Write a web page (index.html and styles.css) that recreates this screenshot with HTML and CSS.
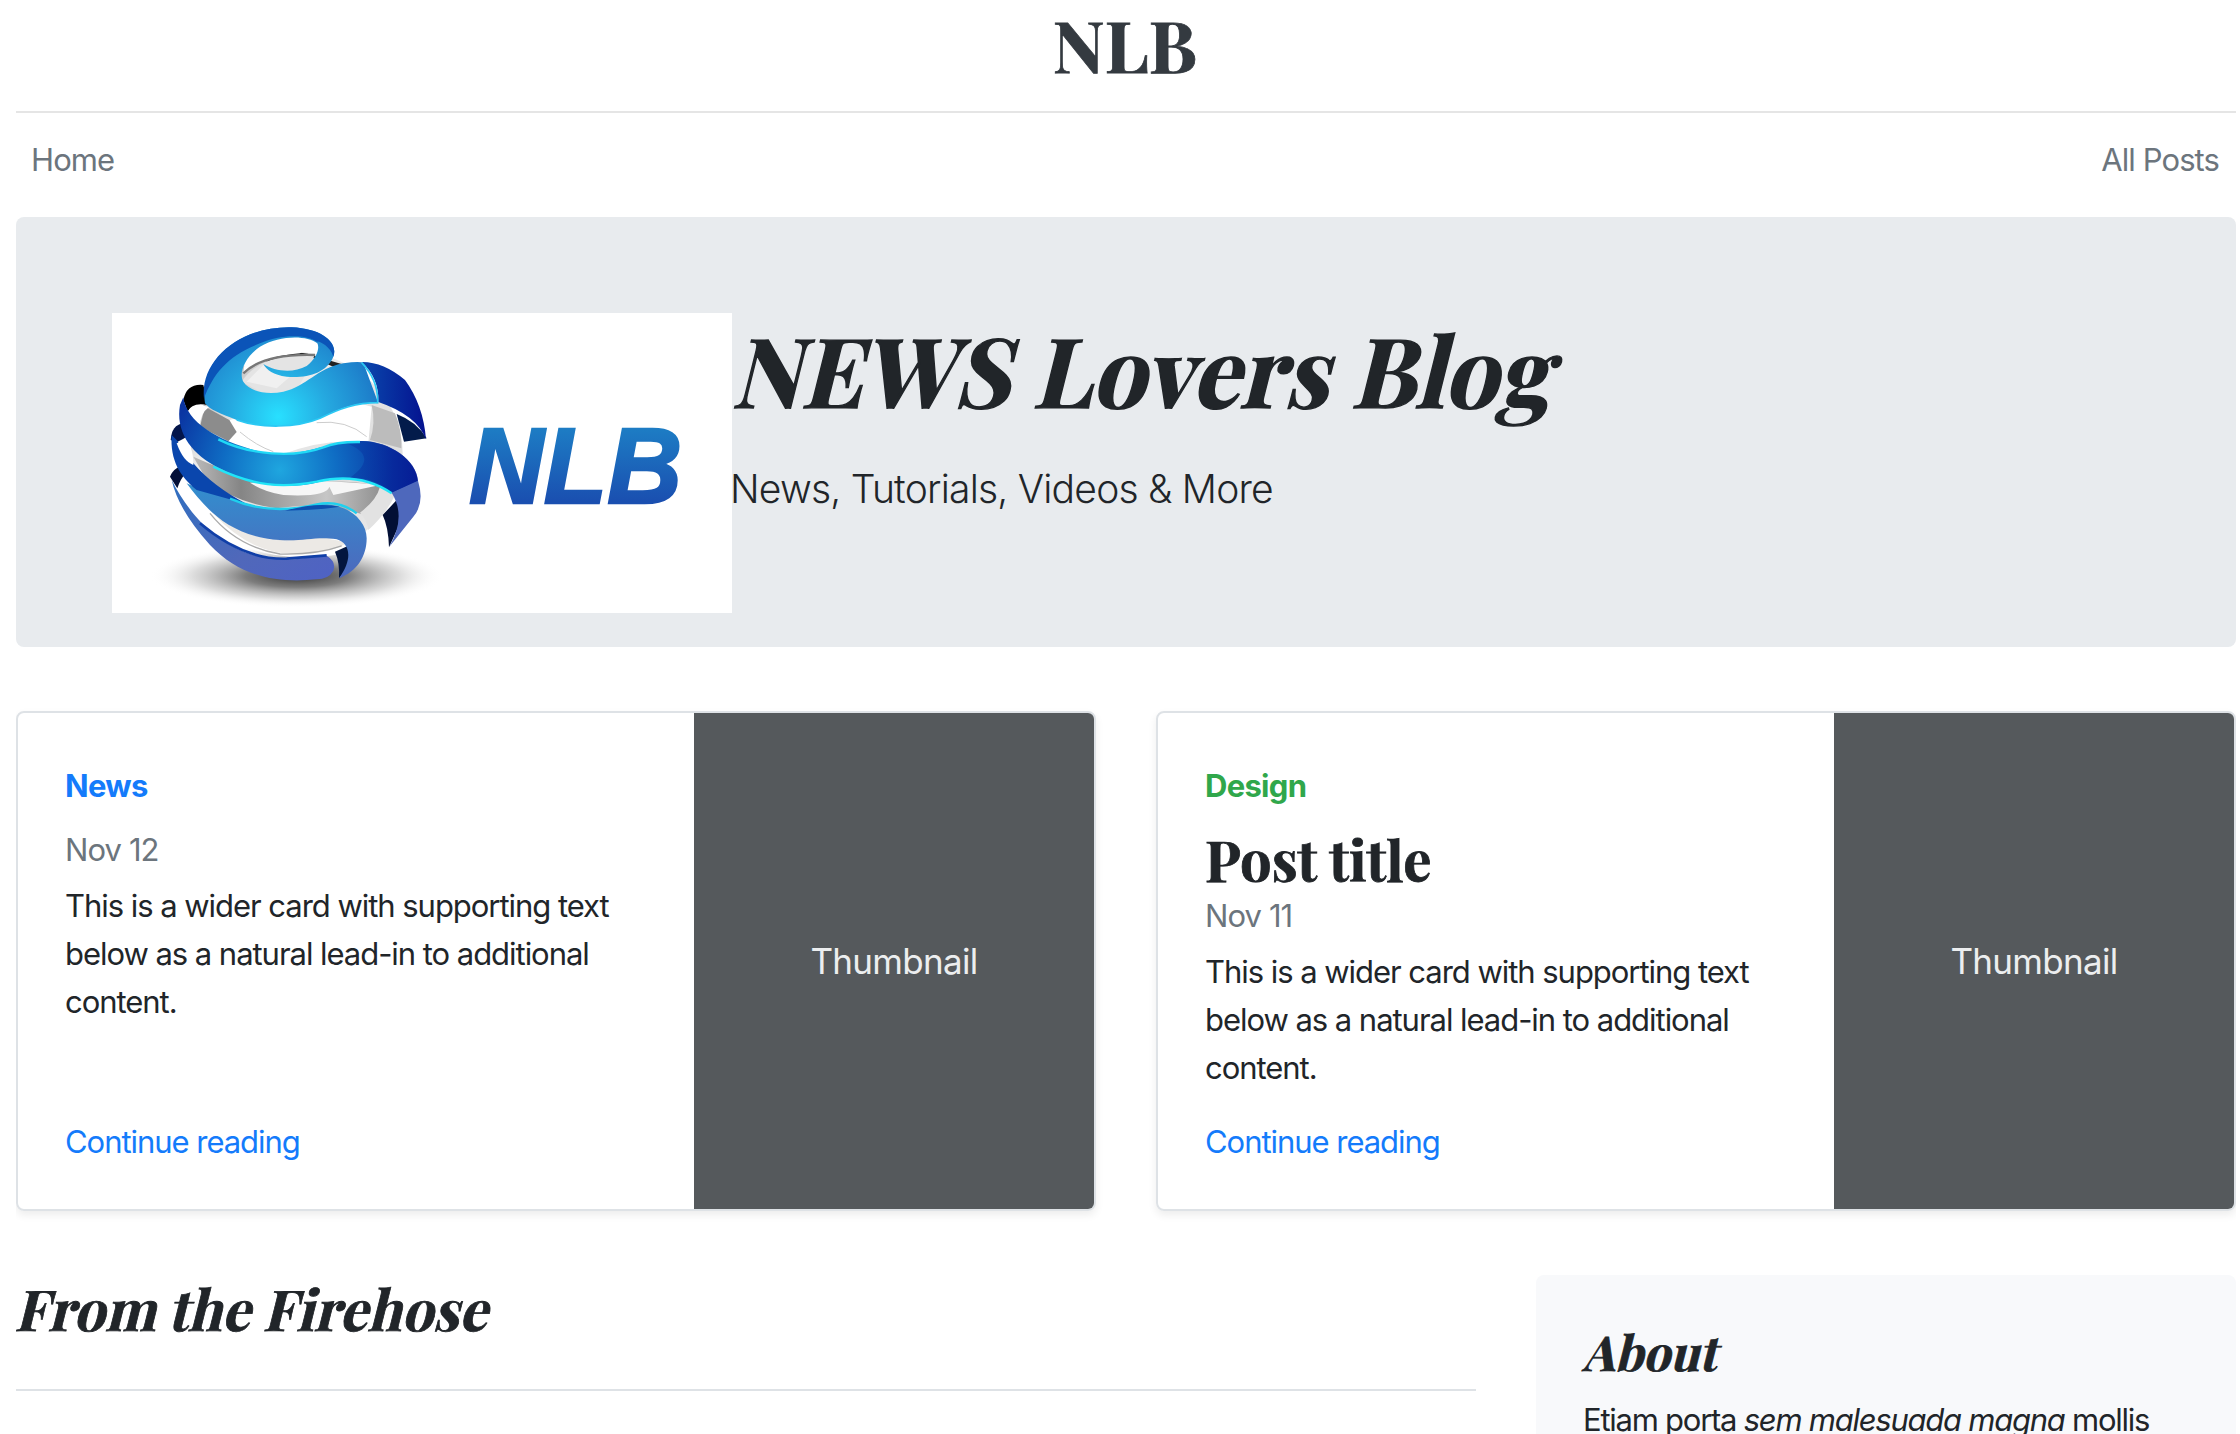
FILE: index.html
```html
<!DOCTYPE html>
<html lang="en">
<head>
<meta charset="utf-8">
<title>NLB</title>
<link rel="stylesheet" href="styles.css">
</head>
<body>
<div class="container">
  <header class="blog-header"><a class="blog-logo">NLB</a></header>
  <nav class="nav"><a>Home</a><a class="nav-all">All Posts</a></nav>

  <section class="jumbotron">
    <svg class="logo" viewBox="0 0 620 300" role="img" aria-label="NLB">
      <defs>
        <radialGradient id="shadow"><stop offset="0" stop-color="#333"/><stop offset=".35" stop-color="#666" stop-opacity=".85"/><stop offset=".7" stop-color="#999" stop-opacity=".35"/><stop offset="1" stop-color="#fff" stop-opacity="0"/></radialGradient>
        <radialGradient id="top" gradientUnits="userSpaceOnUse" cx="385" cy="320" r="330"><stop offset="0" stop-color="#28e0ff"/><stop offset=".45" stop-color="#25a9e0"/><stop offset="1" stop-color="#1b72c4"/></radialGradient>
        <radialGradient id="mid" gradientUnits="userSpaceOnUse" cx="390" cy="480" r="340"><stop offset="0" stop-color="#1fa6df"/><stop offset=".5" stop-color="#0f6dc4"/><stop offset="1" stop-color="#0a35a2"/></radialGradient>
        <linearGradient id="low" x1="0" y1="0" x2="0" y2="1"><stop offset="0" stop-color="#328fce"/><stop offset="1" stop-color="#4d68bd"/></linearGradient>
        <linearGradient id="base" x1="0" y1="0" x2="1" y2="1"><stop offset="0" stop-color="#2e6fc0"/><stop offset=".6" stop-color="#5068ba"/><stop offset="1" stop-color="#4f62c4"/></linearGradient>
        <linearGradient id="dark" x1="0" y1="0" x2="1" y2="0"><stop offset="0" stop-color="#0a48ad"/><stop offset="1" stop-color="#04118f"/></linearGradient>
        <linearGradient id="ball" x1="0" y1="0" x2="1" y2="1"><stop offset="0" stop-color="#999"/><stop offset=".3" stop-color="#eee"/><stop offset=".7" stop-color="#ddd"/><stop offset="1" stop-color="#f3f3f3"/></linearGradient>
        <linearGradient id="grey" x1="0" y1="0" x2="1" y2="0"><stop offset="0" stop-color="#bbb"/><stop offset=".25" stop-color="#858585"/><stop offset=".7" stop-color="#c6c6c6"/><stop offset="1" stop-color="#8e8e8e"/></linearGradient>
        <linearGradient id="word" x1="0" y1="0" x2="0" y2="1"><stop offset=".2" stop-color="#1d7cc4"/><stop offset=".8" stop-color="#1a4fb0"/></linearGradient>
      </defs>
      <g transform="translate(38 -3) scale(.33333)">
        <ellipse cx="440" cy="798" rx="440" ry="96" fill="url(#shadow)"/>
        <ellipse cx="440" cy="432" rx="318" ry="305" fill="url(#ball)"/>
        <path d="M350 150Q440 112 500 140L585 165L560 175L485 142Q420 130 350 155Z" fill="#222"/>
        <path d="M240 330Q500 240 665 290L655 400Q540 380 400 432Q310 430 230 392Z" fill="#fff"/>
        <path d="M165 290L238 330L260 366L235 394L150 350Z" fill="#8c8c8c"/>
        <path d="M665 285L735 310Q756 360 754 415L660 390Q678 340 665 285Z" fill="#bcbcbc"/>
        <path d="M270 366Q320 408 370 425M500 338Q590 328 650 380" fill="none" stroke="#ccc" stroke-width="3"/>
        <path d="M130 440Q240 490 370 525Q560 500 700 530Q680 570 635 612Q520 575 380 595Q260 580 170 510Z" fill="url(#grey)"/>
        <path d="M300 518Q500 505 690 525L550 555L538 530Q530 562 400 555Q340 545 300 518Z" fill="#f6f6f6"/>
        <path d="M690 530L735 555Q710 610 655 660Q650 625 630 608Q680 570 690 530Z" fill="#e2e2e2"/>
        <path d="M90 500Q95 480 150 540Q230 680 410 695L585 685Q620 730 530 738Q380 755 260 700Q150 640 90 530Z" fill="#fff"/>
        <path d="M190 610Q300 735 450 733Q540 730 590 700Q540 675 410 695Q270 680 190 610Z" fill="#ece9e5"/>
        <path d="M180 610Q260 710 390 732Q500 735 575 708" fill="none" stroke="#aaa" stroke-width="4"/>
        <path d="M740 312Q800 335 830 385L762 395Z" fill="#031b4b"/>
        <path d="M100 270Q110 220 160 225L175 285Q125 275 113 305Z" fill="#000"/>
        <path d="M113 305Q125 280 178 290Q150 310 150 350Q120 335 113 305Z" fill="#fff"/>
        <path d="M62 390Q65 345 100 340L150 350Q115 380 80 397Z" fill="#03154a"/>
        <path d="M60 500Q70 470 120 458L135 480Q100 480 82 535Z" fill="#031038"/>
        <path d="M698 615L745 565L750 640L717 712Q715 650 698 615Z" fill="#020f35"/>
        <path d="M555 725L600 705L605 760L567 805Q570 760 555 725Z" fill="#03163f"/>
        <path d="M280 190Q330 140 450 130Q505 100 500 100Q470 75 350 95Q280 130 280 190Z" fill="#fff"/>
        <path d="M275 215Q330 130 495 132L480 170L440 240L350 255Z" fill="#e4e4e4"/>
        <path d="M280 190Q340 130 495 135" fill="none" stroke="#777" stroke-width="7"/>
        <path d="M340 165L420 200L380 235L290 215Z" fill="#f0f0f0"/>
        <path fill-rule="evenodd" d="M165 280C145 150 270 48 425 52C520 56 565 100 550 140C530 190 470 205 410 200C370 195 350 180 340 162C375 185 430 190 470 168C500 145 510 115 502 100C470 75 390 75 330 110C285 140 265 190 280 215C300 245 350 255 400 245C470 230 500 175 580 160Q625 153 640 158L685 280C620 275 570 295 510 325C440 355 330 355 260 330C210 310 180 300 165 280Z" fill="url(#top)"/>
        <path d="M162 265C150 150 270 48 425 52C520 56 565 100 550 140C540 105 500 90 502 96C470 72 390 72 330 100C235 135 190 190 162 265Z" fill="#0b54b8"/>
        <path d="M635 156Q700 155 765 210Q820 285 828 388Q800 315 685 276Q688 205 635 156Z" fill="url(#dark)"/>
        <path d="M635 158Q685 210 683 278C620 278 570 295 510 325C440 355 330 355 260 330" fill="none" stroke="#2bc9f4" stroke-width="5"/>
        <path d="M100 262C110 340 210 395 330 425C460 450 530 390 635 393C720 395 800 450 804 515L725 550C660 500 580 500 510 515C420 540 310 530 220 480C130 440 75 370 90 285Z" fill="url(#mid)"/>
        <path d="M590 400Q610 392 640 393C720 395 800 450 804 512L727 548C690 515 650 503 600 503Q690 440 590 400Z" fill="url(#dark)" opacity=".7"/>
        <path d="M205 388C300 435 430 445 520 412Q560 395 630 396" fill="none" stroke="#20d9f6" stroke-width="7"/>
        <path d="M190 470C310 530 400 535 500 515Q630 485 725 550" fill="none" stroke="#20e5f8" stroke-width="7"/>
        <path d="M725 548L804 512Q825 580 790 620L718 710Q770 620 725 548Z" fill="#4e68bc"/>
        <path d="M110 520Q160 545 240 565C340 605 430 600 490 585C580 570 650 625 650 685C650 740 620 785 567 805C610 745 600 700 560 688C500 678 460 695 390 690C240 680 170 600 110 520Z" fill="url(#low)"/>
        <path d="M65 375C60 450 90 500 140 540L290 582Q190 530 130 460Q95 420 82 392Z" fill="#0a46ad"/>
        <path d="M80 400Q130 380 130 465Q100 455 80 400Z" fill="#fff"/>
        <path d="M240 566C340 610 430 600 500 583Q570 570 620 610" fill="none" stroke="#1fd0ee" stroke-width="7"/>
        <path d="M405 602Q500 575 570 590Q510 600 405 602Z" fill="#0d4fae"/>
        <path d="M65 510C120 620 230 750 410 748C460 750 500 735 530 737Q560 755 550 782Q535 808 500 808C380 820 270 800 180 705Q85 600 65 510Z" fill="url(#base)"/>
        <path d="M150 640Q280 750 410 746L530 736" fill="none" stroke="#103fa8" stroke-width="8"/>
      </g>
      <text class="logo-word" x="357" y="190" textLength="213" lengthAdjust="spacingAndGlyphs" fill="url(#word)" stroke="url(#word)" stroke-width="2.5">NLB</text>
    </svg>
    <div class="hero-copy">
      <h1 class="slanted">NEWS Lovers Blog</h1>
      <p>News, Tutorials, Videos &amp; More</p>
    </div>
  </section>

  <section class="cards">
    <article class="card">
      <div class="card-body">
        <strong class="tag">News</strong>
        <div class="date">Nov 12</div>
        <p class="text">This is a wider card with supporting text below as a natural lead-in to additional content.</p>
        <a class="more">Continue reading</a>
      </div>
      <div class="thumb">Thumbnail</div>
    </article>
    <article class="card">
      <div class="card-body">
        <strong class="tag tag-green">Design</strong>
        <h3>Post title</h3>
        <div class="date">Nov 11</div>
        <p class="text">This is a wider card with supporting text below as a natural lead-in to additional content.</p>
        <a class="more">Continue reading</a>
      </div>
      <div class="thumb">Thumbnail</div>
    </article>
  </section>

  <main class="main">
    <div class="firehose"><h3 class="slanted">From the Firehose</h3></div>
    <aside class="about">
      <h4 class="slanted">About</h4>
      <p>Etiam porta <em>sem malesuada magna</em> mollis</p>
    </aside>
  </main>
</div>
</body>
</html>
```
FILE: styles.css
```css
* { box-sizing: border-box; }
body {
  margin: 0;
  background: #fff;
  color: #212529;
  font: 420 31px/48px Inter, "Liberation Sans", sans-serif;
  letter-spacing: -1.04px;
}
h1, h3, h4, p { margin: 0; }
.container { height: 1434px; margin: 0 4px 0 16px; overflow: hidden; }

h1, h3, h4, .blog-logo {
  font-family: "Playfair Display", "Liberation Serif", serif;
  font-weight: 700;
  letter-spacing: 0;
  -webkit-text-stroke: .8px currentColor;
}
/* Upright face slanted about its baseline */
.slanted { width: max-content; transform: skewX(-14deg); transform-origin: 0 83%; }
h1.slanted { -webkit-text-stroke-width: 1.4px; }

.blog-header {
  height: 113px;
  padding-right: 2px;
  border-bottom: 2px solid #e5e5e5;
  text-align: center;
}
.blog-logo { display: block; color: #343a40; font-size: 72px; line-height: 86px; }

.nav {
  display: flex;
  justify-content: space-between;
  height: 104px;
  padding: 23px 17px 0 15px;
  color: #6c757d;
  letter-spacing: -.9px;
}

.jumbotron {
  display: flex;
  height: 430px;
  padding: 96px;
  border-radius: 8px;
  background: #e8ebee;
}
.logo { flex: none; width: 620px; height: 300px; background: #fff; }
.logo-word { font: italic 700 108px "Liberation Sans", sans-serif; letter-spacing: 0; }
.hero-copy { white-space: nowrap; }
.hero-copy h1 { font-size: 96px; line-height: 111px; }
.hero-copy p { margin: 35px 0 0 -2px; font-size: 39px; font-weight: 350; line-height: 60px; letter-spacing: -.77px; }

.cards { display: grid; grid-template-columns: 1fr 1fr; gap: 60px; margin-top: 64px; }
.card {
  display: flex;
  height: 500px;
  overflow: hidden;
  border: 2px solid #dee2e6;
  border-radius: 8px;
  box-shadow: 0 4px 8px rgba(0, 0, 0, .075);
}
.card-body { display: flex; flex: 1; flex-direction: column; padding: 49px 48px 43px 47px; }
.tag { margin-bottom: 16px; color: #147bfb; font-weight: 700; letter-spacing: -.7px; }
.tag-green { color: #30a74b; }
.card h3 { margin-bottom: 1px; font-size: 56px; line-height: 65px; }
.date { margin-bottom: 8px; color: #6c757d; letter-spacing: -.9px; }
.text { margin-bottom: auto; }
.more { color: #147bfb; }
.thumb {
  display: flex;
  flex: none;
  align-items: center;
  justify-content: center;
  width: 400px;
  background: #55595c;
  color: #eceeef;
  font-size: 35px;
  letter-spacing: -.7px;
}

.main { display: grid; grid-template-columns: 1460px 700px; gap: 60px; margin-top: 64px; align-items: start; }
.firehose { height: 116px; border-bottom: 2px solid #dee2e6; }
.firehose h3 { margin-left: -1px; font-size: 56px; line-height: 65px; }
.about { padding: 48px 48px 0 47px; border-radius: 8px 8px 0 0; background: #f8f9fb; letter-spacing: -1.25px; }
.about h4 { margin-bottom: 17px; font-size: 48px; line-height: 56px; }
```
